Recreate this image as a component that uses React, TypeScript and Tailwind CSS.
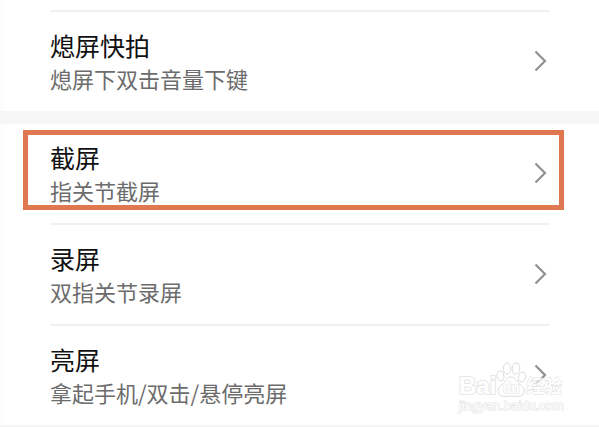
import React from 'react';
import clsx from 'clsx';

interface SettingRowProps {
  title: string;
  description: string;
  divided?: boolean;
  highlighted?: boolean;
}

const SettingRow: React.FC<SettingRowProps> = ({ title, description, divided = false, highlighted = false }) => (
  <li className="relative pl-[45px] pr-[49px]">
    <button
      type="button"
      className={clsx(
        'flex w-full items-center justify-between pt-4 pb-[17px] text-left',
        divided && 'border-t-2 border-[#f0f0f0]'
      )}
    >
      <span className="block">
        <span className="block text-[25px] leading-[34px] text-[#111111]">{title}</span>
        <span className="mt-px block text-[22px] leading-[31px] text-[#6c6c6c]">{description}</span>
      </span>
      <svg className="mr-[3px] h-[22px] w-[13px] shrink-0" viewBox="0 0 13 22" fill="none" stroke="#919191" strokeWidth="2.2">
        <path d="M1.5 1.5 L11 11 L1.5 20.5" />
      </svg>
    </button>
    {highlighted && (
      <span className="pointer-events-none absolute top-[6px] right-[35px] bottom-[13px] left-[18px] border-5 border-[#df7751]" />
    )}
  </li>
);

const outline = '[-webkit-text-stroke:2px_#e2e2e2] [paint-order:stroke_fill] text-white';
const thinOutline = '[-webkit-text-stroke:1px_#d8d8d8] [paint-order:stroke_fill] text-white';

const Watermark: React.FC = () => (
  <div className="pointer-events-none absolute right-[34px] bottom-[13px] w-[106px] font-['Liberation_Sans','Noto_Sans_CJK_SC',sans-serif] opacity-80">
    <div className="flex items-end">
      <span className={clsx('text-[24px] leading-[24px] font-bold', outline)}>Bai</span>
      <span className="relative block h-[36px] w-[30px] shrink-0">
        <svg className="h-full w-full" viewBox="0 0 30 36" fill="white" stroke="#d4d4d4" strokeWidth="1">
          <ellipse cx="4.5" cy="14" rx="3.5" ry="5" transform="rotate(-12 4.5 14)" />
          <ellipse cx="11" cy="6.5" rx="3.8" ry="5.5" />
          <ellipse cx="20" cy="6.5" rx="3.8" ry="5.5" transform="rotate(8 20 6.5)" />
          <ellipse cx="26" cy="15" rx="3.5" ry="5" transform="rotate(12 26 15)" />
          <path d="M15 15 C10.5 15 9.5 20 6 22.5 C2 25.5 1.5 29 3 32 C5 35.5 10 34.5 15 34 C20 34.5 25 35.5 27.5 32 C29 28.5 28 25 24 22.5 C20.5 20 19.5 15 15 15 Z" />
        </svg>
        <span className={clsx('absolute inset-x-0 bottom-0.5 text-center text-[14px] leading-4 font-bold', thinOutline)}>du</span>
      </span>
      <span className={clsx('text-[18px] leading-[22px] font-bold whitespace-nowrap', thinOutline)}>经验</span>
    </div>
    <div className={clsx('text-[13px] leading-4 whitespace-nowrap', thinOutline)}>jingyan.baidu.com</div>
  </div>
);

export default function App() {
  return (
    <main className="relative border-l-5 border-[#fdfdfd] bg-white pt-[10px] font-['Noto_Sans_CJK_SC',sans-serif]">
      <ul>
        <SettingRow title="熄屏快拍" description="熄屏下双击音量下键" divided />
      </ul>
      <div className="-ml-[5px] h-[13px] bg-[#f6f6f6]" />
      <ul>
        <SettingRow title="截屏" description="指关节截屏" highlighted />
        <SettingRow title="录屏" description="双指关节录屏" divided />
        <SettingRow title="亮屏" description="拿起手机/双击/悬停亮屏" divided />
      </ul>
      <div className="-ml-[5px] h-[2px] bg-[#f6f6f6]" />
      <Watermark />
    </main>
  );
}
